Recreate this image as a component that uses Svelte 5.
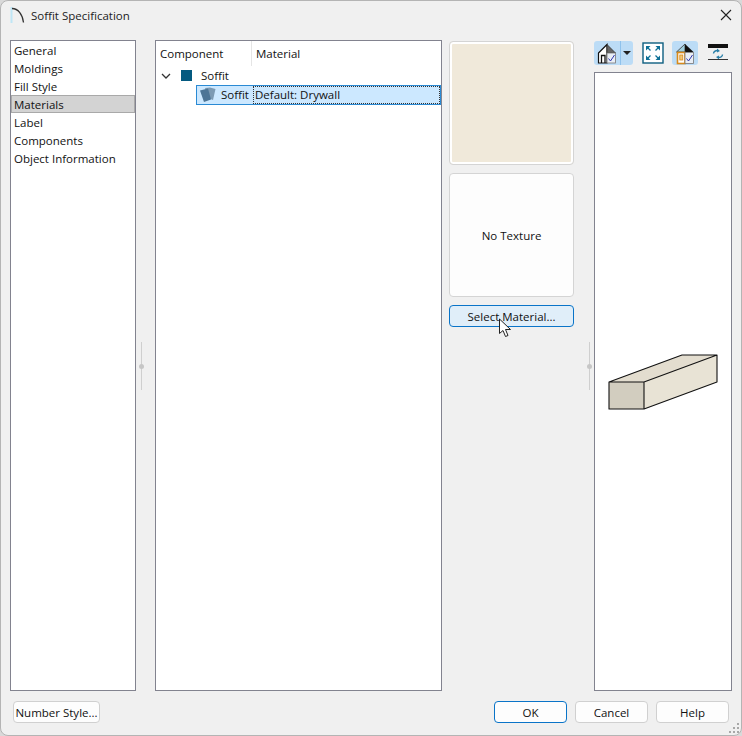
<script>
  const categories = ["General", "Moldings", "Fill Style", "Materials", "Label", "Components", "Object Information"];
  let selected = "Materials";
</script>

<div class="dialog">
  <header class="titlebar">
    <svg class="app-icon" width="16" height="18" viewBox="0 0 16 18">
      <rect x="0.5" y="1" width="2" height="16" fill="#bfe6f5" />
      <path d="M2 2.5 C8 2.5 12.5 8 13.5 16.5" fill="none" stroke="#333" stroke-width="1.3" />
    </svg>
    <span class="title">Soffit Specification</span>
    <svg class="close" width="12" height="12" viewBox="0 0 12 12">
      <path d="M1 1 L11 11 M11 1 L1 11" stroke="#222" stroke-width="1.1" />
    </svg>
  </header>

  <main class="body">
    <ul class="categories">
      {#each categories as item}
        <li class:active={item === selected}>{item}</li>
      {/each}
    </ul>

    <div class="gutter"><span class="grip"></span></div>

    <section class="tree">
      <div class="tree-head">
        <span class="col-component">Component</span>
        <span class="col-material">Material</span>
      </div>
      <div class="tree-row">
        <svg class="chevron" width="10" height="6" viewBox="0 0 10 6">
          <path d="M1 1 L5 5 L9 1" fill="none" stroke="#333" stroke-width="1.3" />
        </svg>
        <span class="swatch"></span>
        <span>Soffit</span>
      </div>
      <div class="tree-child">
        <div class="child-name">
          <svg width="18" height="16" viewBox="0 0 18 16">
            <path d="M6 1 L11 0.5 L16.5 2 L14 13 L9 11 Z" fill="#7c9ab3" />
            <path d="M1 3.5 L9 1.5 L12 12.5 L5 15 Z" fill="#4d7596" />
          </svg>
          <span>Soffit</span>
        </div>
        <div class="child-material">Default: Drywall</div>
      </div>
    </section>

    <section class="material">
      <div class="preview color"></div>
      <div class="preview texture">No Texture</div>
      <button class="btn hover">Select Material...</button>
      <svg class="cursor" width="15" height="20" viewBox="0 0 15 20">
        <path d="M1.5 1 L1.5 15.5 L5 12.5 L7.5 18.5 L10 17.5 L7.5 11.5 L12.5 11.5 Z" fill="#fff" stroke="#222" stroke-width="1" />
      </svg>
    </section>

    <div class="gutter right"><span class="grip"></span></div>

    <section class="side">
      <div class="toolbar">
        <div class="split">
          <span class="tool on">
            <svg width="24" height="24" viewBox="0 0 24 24">
              <path d="M3.5 12 L12 3.5 L12 22 L3.5 22 Z" fill="#fff" stroke="#111" stroke-width="1.2" />
              <path d="M12 3.5 L20.5 12 L12 12 Z" fill="#666" stroke="#333" stroke-width="0.8" />
              <rect x="12" y="12" width="8.5" height="10" fill="#e9eef5" stroke="#777" stroke-width="0.8" />
              <path d="M6.5 22 L6.5 14.5 L10 14.5 L10 22" fill="none" stroke="#111" stroke-width="1.3" />
              <path d="M13.5 17.5 L15.5 20 L19.5 14" fill="none" stroke="#3038b0" stroke-width="1" />
            </svg>
          </span>
          <span class="arrow"></span>
        </div>
        <span class="tool expand">
          <svg width="22" height="22" viewBox="0 0 22 22">
            <rect x="1" y="1" width="20" height="20" fill="#fff" stroke="#0d5f80" stroke-width="1.4" />
            <path d="M4 4 L8.5 4 L4 8.5 Z M18 4 L13.5 4 L18 8.5 Z M4 18 L8.5 18 L4 13.5 Z M18 18 L13.5 18 L18 13.5 Z" fill="#0d6f96" />
            <path d="M5 5 L8.5 8.5 M17 5 L13.5 8.5 M5 17 L8.5 13.5 M17 17 L13.5 13.5" stroke="#0d6f96" stroke-width="1.3" />
          </svg>
        </span>
        <span class="tool on single">
          <svg width="24" height="24" viewBox="0 0 24 24">
            <path d="M3.5 11 L12 3 L12 11 Z" fill="#9fd0e0" stroke="#333" stroke-width="0.8" />
            <path d="M12 3 L20.5 11 L12 11 Z" fill="#111" />
            <rect x="4.5" y="11.5" width="7.5" height="11" fill="#fff" stroke="#d98a1a" stroke-width="1.6" />
            <rect x="6.8" y="14" width="3" height="5" fill="#f2c879" stroke="#d98a1a" stroke-width="0.8" />
            <rect x="12" y="11.5" width="8.5" height="11" fill="#e9eef5" stroke="#777" stroke-width="0.8" />
            <path d="M13.5 17.5 L15.5 20 L19.5 14" fill="none" stroke="#3038b0" stroke-width="1" />
          </svg>
        </span>
        <span class="tool plain">
          <svg width="22" height="20" viewBox="0 0 22 20">
            <rect x="1" y="1" width="20" height="4" fill="#111" />
            <path d="M6.5 10.5 A4 3 0 0 1 10.5 7.5 M15.5 11.5 A4 3 0 0 1 11.5 14.5" fill="none" stroke="#2b7fa8" stroke-width="1.4" />
            <path d="M10 5.5 L13 8 L10 9.5 Z M12 12.5 L9 14 L12 16.5 Z" fill="#2b7fa8" />
            <rect x="1" y="16" width="20" height="1" fill="#333" />
          </svg>
        </span>
      </div>
      <div class="view">
        <svg width="138" height="70" viewBox="0 0 138 70">
          <path d="M14 28 L49 28 L49 55 L14 55 Z" fill="#d2cdbf" />
          <path d="M14 28 L87 1 L122 1 L49 28 Z" fill="#e3ddcf" />
          <path d="M49 28 L122 1 L122 28 L49 55 Z" fill="#e8e3d5" />
          <path d="M14 28 L87 1 L122 1 L122 28 L49 55 L14 55 Z M14 28 L49 28 L122 1 M49 28 L49 55" fill="none" stroke="#111" stroke-width="1.1" stroke-linejoin="round" />
        </svg>
      </div>
    </section>
  </main>

  <footer class="footer">
    <button class="btn number">Number Style...</button>
    <div class="actions">
      <button class="btn primary">OK</button>
      <button class="btn">Cancel</button>
      <button class="btn">Help</button>
    </div>
  </footer>

  <svg class="resize" width="12" height="12" viewBox="0 0 12 12">
    <path d="M9 1h2v2h-2z M5 5h2v2h-2z M9 5h2v2h-2z M1 9h2v2h-2z M5 9h2v2h-2z M9 9h2v2h-2z" fill="#a8a8a8" />
  </svg>
</div>

<style>
  :global(body) {
    background: #d9d9d9;
  }
  .dialog {
    position: relative;
    box-sizing: border-box;
    width: 742px;
    height: 736px;
    background: #f0f0f0;
    border: 1px solid #b4b4b4;
    border-radius: 8px;
    display: flex;
    flex-direction: column;
    overflow: hidden;
    font-family: "Open Sans", "Noto Sans", sans-serif;
    font-size: 11.5px;
    color: #111;
    white-space: nowrap;
  }
  .titlebar {
    height: 30px;
    display: flex;
    align-items: center;
    padding: 0 9px 2px 9px;
    box-sizing: border-box;
    flex-shrink: 0;
  }
  .app-icon {
    margin-right: 5px;
  }
  .title {
    flex: 1;
    color: #222;
  }
  .body {
    flex: 1;
    display: flex;
    padding: 9px 9px 0 9px;
    min-height: 0;
  }
  .categories {
    box-sizing: border-box;
    width: 126px;
    margin: 0;
    padding: 0;
    list-style: none;
    background: #fff;
    border: 1px solid #82838f;
  }
  .categories li {
    height: 18px;
    line-height: 19px;
    padding-left: 3px;
  }
  .categories li.active {
    background: #d3d3d3;
    outline: 1px solid #a9a9a9;
    outline-offset: -1px;
  }
  .gutter {
    width: 19px;
    display: flex;
    align-items: center;
    padding-left: 5px;
    box-sizing: border-box;
  }
  .gutter.right {
    width: 20px;
    padding-left: 15px;
  }
  .grip {
    position: relative;
    width: 1px;
    height: 48px;
    background: #cfcfcf;
  }
  .grip::after {
    content: "";
    position: absolute;
    left: -2px;
    top: 22px;
    width: 5px;
    height: 5px;
    border-radius: 50%;
    background: #c6c6c6;
  }
  .tree {
    box-sizing: border-box;
    width: 287px;
    background: #fff;
    border: 1px solid #82838f;
  }
  .tree-head {
    height: 25px;
    display: flex;
    line-height: 26px;
  }
  .col-component {
    box-sizing: border-box;
    width: 96px;
    padding-left: 4px;
    border-right: 1px solid #e5e5e5;
  }
  .col-material {
    padding-left: 4px;
  }
  .tree-row {
    height: 19px;
    display: flex;
    align-items: center;
    padding-left: 5px;
  }
  .chevron {
    margin-right: 10px;
  }
  .swatch {
    width: 11px;
    height: 11px;
    background: #045a80;
    margin-right: 9px;
  }
  .tree-child {
    box-sizing: border-box;
    margin-left: 40px;
    height: 20px;
    display: flex;
    background: #cce8ff;
    border: 1px solid #2a8ad4;
    line-height: 18px;
  }
  .child-name {
    box-sizing: border-box;
    width: 56px;
    display: flex;
    align-items: center;
    gap: 4px;
    padding-left: 2px;
  }
  .child-material {
    flex: 1;
    padding-left: 2px;
    outline: 1px dotted #333;
    outline-offset: -1px;
    line-height: 18px;
  }
  .material {
    position: relative;
    box-sizing: border-box;
    width: 125px;
    margin-left: 7px;
    display: flex;
    flex-direction: column;
    padding-top: 1px;
  }
  .preview {
    box-sizing: border-box;
    height: 124px;
    border: 1px solid #d4d4d4;
    border-radius: 4px;
    margin-bottom: 8px;
  }
  .color {
    background: #f0e9da;
    box-shadow: inset 0 0 0 2px #fff;
  }
  .texture {
    background: #fdfdfd;
    display: flex;
    align-items: center;
    justify-content: center;
  }
  .btn {
    box-sizing: border-box;
    height: 22px;
    padding: 0;
    font: inherit;
    color: #111;
    background: #fdfdfd;
    border: 1px solid #d0d0d0;
    border-radius: 4px;
  }
  .btn.hover {
    background: #e0eef9;
    border-color: #0a74c8;
  }
  .cursor {
    position: absolute;
    left: 49px;
    top: 278px;
  }
  .side {
    width: 138px;
    display: flex;
    flex-direction: column;
  }
  .toolbar {
    height: 26px;
    margin-bottom: 6px;
    display: flex;
    align-items: center;
  }
  .split {
    display: flex;
    height: 24px;
    margin-right: 9px;
  }
  .tool {
    display: flex;
    align-items: center;
    justify-content: center;
  }
  .tool svg {
    display: block;
  }
  .tool.on {
    width: 26px;
    height: 24px;
    background: #bcdcf6;
    border-radius: 3px;
  }
  .split .tool.on {
    border-radius: 3px 0 0 3px;
    border-right: 1px solid #8fc2ec;
  }
  .arrow {
    position: relative;
    width: 12px;
    background: #bcdcf6;
    border-radius: 0 3px 3px 0;
  }
  .arrow::after {
    content: "";
    position: absolute;
    left: 2px;
    top: 10px;
    border: 4px solid transparent;
    border-top: 4px solid #222;
    border-bottom: 0;
  }
  .expand {
    margin-right: 8px;
  }
  .single {
    margin-right: 9px;
  }
  .view {
    flex: 1;
    box-sizing: border-box;
    background: #fff;
    border: 1px solid #82838f;
    display: flex;
    align-items: center;
  }
  .view svg {
    margin-top: 15px;
    flex-shrink: 0;
  }
  .footer {
    flex-shrink: 0;
    height: 44px;
    box-sizing: border-box;
    padding: 10px 12px 0;
    display: flex;
    justify-content: space-between;
    align-items: flex-start;
  }
  .number {
    width: 87px;
  }
  .actions {
    display: flex;
    gap: 8px;
  }
  .actions .btn {
    width: 73px;
  }
  .btn.primary {
    border: 1.5px solid #0a74c8;
  }
  .resize {
    position: absolute;
    right: 1px;
    bottom: 1px;
  }
</style>
